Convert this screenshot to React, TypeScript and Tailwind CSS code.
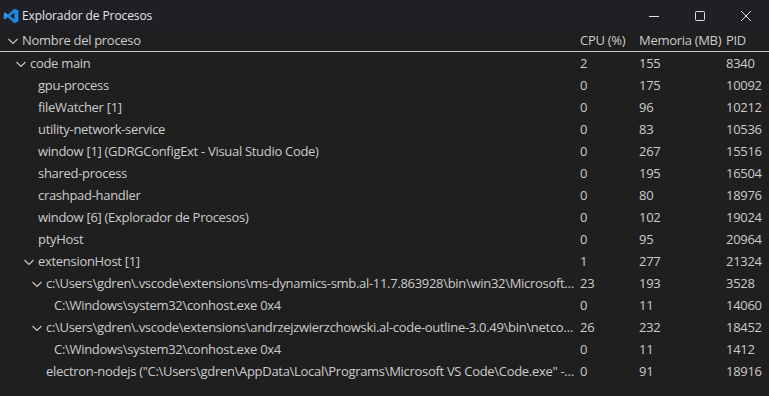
import React from 'react';

type Row = { name: string; depth: number; open?: boolean; cpu: string; mem: string; pid: string };

const rows: Row[] = [
  { name: 'code main', depth: 1, open: true, cpu: '2', mem: '155', pid: '8340' },
  { name: 'gpu-process', depth: 2, cpu: '0', mem: '175', pid: '10092' },
  { name: 'fileWatcher [1]', depth: 2, cpu: '0', mem: '96', pid: '10212' },
  { name: 'utility-network-service', depth: 2, cpu: '0', mem: '83', pid: '10536' },
  { name: 'window [1] (GDRGConfigExt - Visual Studio Code)', depth: 2, cpu: '0', mem: '267', pid: '15516' },
  { name: 'shared-process', depth: 2, cpu: '0', mem: '195', pid: '16504' },
  { name: 'crashpad-handler', depth: 2, cpu: '0', mem: '80', pid: '18976' },
  { name: 'window [6] (Explorador de Procesos)', depth: 2, cpu: '0', mem: '102', pid: '19024' },
  { name: 'ptyHost', depth: 2, cpu: '0', mem: '95', pid: '20964' },
  { name: 'extensionHost [1]', depth: 2, open: true, cpu: '1', mem: '277', pid: '21324' },
  {
    name: 'c:\\Users\\gdren\\.vscode\\extensions\\ms-dynamics-smb.al-11.7.863928\\bin\\win32\\Microsoft.Dynamics.Nav.EditorServices.Host.exe',
    depth: 3,
    open: true,
    cpu: '23',
    mem: '193',
    pid: '3528',
  },
  { name: 'C:\\Windows\\system32\\conhost.exe 0x4', depth: 4, cpu: '0', mem: '11', pid: '14060' },
  {
    name: 'c:\\Users\\gdren\\.vscode\\extensions\\andrzejzwierzchowski.al-code-outline-3.0.49\\bin\\netcore\\AZALDevToolsServer.NetCore.exe',
    depth: 3,
    open: true,
    cpu: '26',
    mem: '232',
    pid: '18452',
  },
  { name: 'C:\\Windows\\system32\\conhost.exe 0x4', depth: 4, cpu: '0', mem: '11', pid: '1412' },
  {
    name: 'electron-nodejs ("C:\\Users\\gdren\\AppData\\Local\\Programs\\Microsoft VS Code\\Code.exe" --ms-enable-electron-run-as-node)',
    depth: 3,
    cpu: '0',
    mem: '91',
    pid: '18916',
  },
];

const Chevron = () => (
  <svg width="16" height="16" viewBox="0 0 16 16" className="shrink-0">
    <path d="M2.5 6 L7 10.5 L11.5 6" fill="none" stroke="#cccccc" strokeWidth="1.1" />
  </svg>
);

const VsCodeLogo = () => (
  <svg width="16" height="16" viewBox="0 0 100 100">
    <path d="M71 4 L96 16 V84 L71 96 L30 58 L12 72 L4 68 V32 L12 28 L30 42 Z M71 28 L44 50 L71 72 Z" fill="#1e88e5" />
    <path d="M12 28 L30 42 L12 56 Z" fill="#42a5f5" />
  </svg>
);

const indent = ['pl-[6px]', 'pl-[14px]', 'pl-[22px]', 'pl-[30px]', 'pl-[38px]'];

export default function App() {
  return (
    <div
      className="w-[769px] h-[396px] bg-[#1f1f1f] text-[#cccccc] text-[13px] tracking-[-0.3px] overflow-hidden flex flex-col"
      style={{ fontFamily: '"Open Sans", "Noto Sans", sans-serif' }}
    >
      {/* Title bar */}
      <div className="h-[30px] bg-[#201f24] flex items-center shrink-0 pt-[1px]">
        <div className="w-[22px] flex justify-center">
          <VsCodeLogo />
        </div>
        <span className="text-[12px] tracking-[-0.1px] text-[#e6e6e6]">Explorador de Procesos</span>
        <div className="ml-auto flex h-full">
          <div className="w-[46px] flex items-center justify-center">
            <svg width="10" height="10" viewBox="0 0 10 10"><path d="M0 5.5 H10" stroke="#e0e0e0" strokeWidth="1" /></svg>
          </div>
          <div className="w-[46px] flex items-center justify-center">
            <svg width="10" height="10" viewBox="0 0 10 10"><rect x="0.5" y="0.5" width="9" height="9" rx="1" fill="none" stroke="#e0e0e0" strokeWidth="1" /></svg>
          </div>
          <div className="w-[46px] flex items-center justify-center">
            <svg width="10" height="10" viewBox="0 0 10 10"><path d="M0 0 L10 10 M10 0 L0 10" stroke="#e0e0e0" strokeWidth="1" /></svg>
          </div>
        </div>
      </div>

      {/* Header */}
      <div className="h-[22px] flex items-center border-b border-[#c8c8c8] shrink-0 pt-[1px]">
        <div className="flex-1 min-w-0 flex items-center pl-[6px]">
          <Chevron />
          <span className="truncate">Nombre del proceso</span>
        </div>
        <div className="w-[59px] shrink-0">CPU (%)</div>
        <div className="w-[87px] shrink-0">Memoria (MB)</div>
        <div className="w-[43px] shrink-0">PID</div>
      </div>

      {/* Rows */}
      <div className="flex flex-col">
        {rows.map((r, i) => (
          <div key={i} className="h-[22px] flex items-center pt-[1px]">
            <div className={`flex-1 min-w-0 flex items-center ${indent[r.depth]}`}>
              {r.open ? <Chevron /> : <span className="w-[16px] shrink-0" />}
              <span className="truncate pr-[3px]">{r.name}</span>
            </div>
            <div className="w-[59px] shrink-0">{r.cpu}</div>
            <div className="w-[87px] shrink-0">{r.mem}</div>
            <div className="w-[43px] shrink-0">{r.pid}</div>
          </div>
        ))}
      </div>
    </div>
  );
}
